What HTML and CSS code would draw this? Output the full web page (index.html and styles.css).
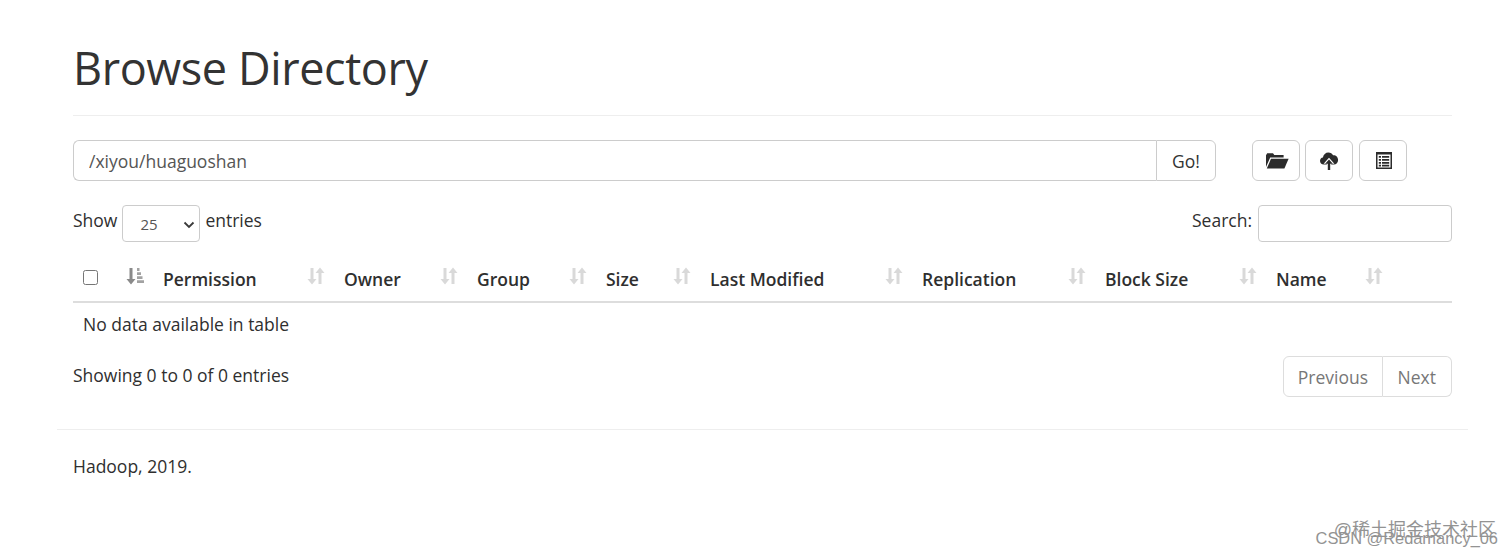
FILE: index.html
```html
<!DOCTYPE html>
<html lang="en">
<head>
    <meta charset="UTF-8">
    <title>Browsing HDFS</title>
    <link rel="stylesheet" href="styles.css">
</head>
<body>
    <div class="container">
        <div class="page-header">
            <h1>Browse Directory</h1>
        </div>

        <div class="toolbar">
            <div class="path-group">
                <input class="path-input" type="text" value="/xiyou/huaguoshan">
                <button class="go-btn">Go!</button>
            </div>
            <div class="icon-btns">
                <button class="icon-btn">
                    <svg class="icon-shift" width="24" height="17" viewBox="0 0 24 17"><path fill="#2b2b2b" d="M1 15V3.200L2.200 1.200H8L9.300 3H18.600V5.600H5.200L1 15Z"/><path fill="#2b2b2b" d="M6 6.800H23.600L19.400 16.400H1.800Z"/></svg>
                </button>
                <button class="icon-btn">
                    <svg width="20" height="20" viewBox="0 0 20 20"><path fill="#2b2b2b" d="M5 13.600C2.400 13.600 1 11.800 1 9.800 1 8 2.300 6.600 3.900 6.400 4.400 3.400 6.600 1.400 9.400 1.400c2.100 0 3.900 1.100 4.700 2.900 2.800-.2 5 1.900 5 4.800 0 2.400-1.800 4.500-4.100 4.500Z"/><path fill="#fff" d="M10 6.800 15.400 12.800H12.200V19.600H7.800V12.800H4.600Z"/><path fill="#2b2b2b" d="M10 8.400 13.800 12.800H11.200V19H8.800V12.800H6.200Z"/></svg>
                </button>
                <button class="icon-btn">
                    <svg class="icon-shift" width="16" height="17" viewBox="0 0 16 17"><path fill="#2b2b2b" fill-rule="evenodd" d="M0 0H16V17H0ZM1.500 2.500V15.500H14.500V2.500ZM2.800 4H5V5.800H2.800ZM6 4H13.200V5.800H6ZM2.800 7H5V8.800H2.800ZM6 7H13.200V8.800H6ZM2.800 10H5V11.800H2.800ZM6 10H13.200V11.800H6ZM2.800 12.800H5V14.400H2.800ZM6 12.800H13.200V14.400H6Z"/></svg>
                </button>
            </div>
        </div>

        <div class="table-top">
            <label class="length-label">Show
                <span class="select-wrap">
                    <select class="length-select"><option>25</option></select>
                    <svg class="select-arrow" width="12" height="8" viewBox="0 0 12 8"><path fill="none" stroke="#3a3a3a" stroke-width="1.800" d="M1.500 1.500 6 6 10.500 1.500"/></svg>
                </span>
                entries</label>
            <label class="search-label">Search:
                <input class="search-input" type="text"></label>
        </div>

        <table class="file-table">
            <thead>
                <tr>
                    <th class="col-check">
                        <div class="th-inner">
                            <input class="row-check" type="checkbox">
                            <svg class="sort-icon" width="18" height="18" viewBox="0 0 18 18"><path fill="#8a8a8a" d="M3.500 1H6.500V12H9.500L5 17.500.5 12H3.500Z"/><path fill="#a2a2a2" d="M11 1H13.500V4H11ZM11 5.200H15V8H11ZM11 9.200H16.500V12H11ZM11 13.200H18V16H11Z"/></svg>
                        </div>
                    </th>
                    <th class="col-perm"><div class="th-inner">Permission<svg class="sort-icon" width="18" height="18" viewBox="0 0 18 18"><path class="sort-down" d="M3.500 1H6.500V12H9.500L5 17.500.5 12H3.500Z"/><path class="sort-up" d="M11.500 17V6H8.500L13 .5 17.500 6H14.500V17Z"/></svg></div></th>
                    <th class="col-owner"><div class="th-inner">Owner<svg class="sort-icon" width="18" height="18" viewBox="0 0 18 18"><path class="sort-down" d="M3.500 1H6.500V12H9.500L5 17.500.5 12H3.500Z"/><path class="sort-up" d="M11.500 17V6H8.500L13 .5 17.500 6H14.500V17Z"/></svg></div></th>
                    <th class="col-group"><div class="th-inner">Group<svg class="sort-icon" width="18" height="18" viewBox="0 0 18 18"><path class="sort-down" d="M3.500 1H6.500V12H9.500L5 17.500.5 12H3.500Z"/><path class="sort-up" d="M11.500 17V6H8.500L13 .5 17.500 6H14.500V17Z"/></svg></div></th>
                    <th class="col-size"><div class="th-inner">Size<svg class="sort-icon" width="18" height="18" viewBox="0 0 18 18"><path class="sort-down" d="M3.500 1H6.500V12H9.500L5 17.500.5 12H3.500Z"/><path class="sort-up" d="M11.500 17V6H8.500L13 .5 17.500 6H14.500V17Z"/></svg></div></th>
                    <th class="col-modified"><div class="th-inner">Last Modified<svg class="sort-icon" width="18" height="18" viewBox="0 0 18 18"><path class="sort-down" d="M3.500 1H6.500V12H9.500L5 17.500.5 12H3.500Z"/><path class="sort-up" d="M11.500 17V6H8.500L13 .5 17.500 6H14.500V17Z"/></svg></div></th>
                    <th class="col-repl"><div class="th-inner">Replication<svg class="sort-icon" width="18" height="18" viewBox="0 0 18 18"><path class="sort-down" d="M3.500 1H6.500V12H9.500L5 17.500.5 12H3.500Z"/><path class="sort-up" d="M11.500 17V6H8.500L13 .5 17.500 6H14.500V17Z"/></svg></div></th>
                    <th class="col-block"><div class="th-inner">Block Size<svg class="sort-icon" width="18" height="18" viewBox="0 0 18 18"><path class="sort-down" d="M3.500 1H6.500V12H9.500L5 17.500.5 12H3.500Z"/><path class="sort-up" d="M11.500 17V6H8.500L13 .5 17.500 6H14.500V17Z"/></svg></div></th>
                    <th class="col-name"><div class="th-inner">Name<svg class="sort-icon" width="18" height="18" viewBox="0 0 18 18"><path class="sort-down" d="M3.500 1H6.500V12H9.500L5 17.500.5 12H3.500Z"/><path class="sort-up" d="M11.500 17V6H8.500L13 .5 17.500 6H14.500V17Z"/></svg></div></th>
                    <th class="col-rest"></th>
                </tr>
            </thead>
            <tbody>
                <tr><td colspan="10">No data available in table</td></tr>
            </tbody>
        </table>

        <div class="table-bottom">
            <div class="info">Showing 0 to 0 of 0 entries</div>
            <div class="pager">
                <a class="page-link">Previous</a>
                <a class="page-link">Next</a>
            </div>
        </div>

        <hr class="footer-line">
        <div class="footer">Hadoop, 2019.</div>
    </div>
    <div class="watermark watermark-top">@稀土掘金技术社区</div>
    <div class="watermark watermark-bottom">CSDN @Redamancy_06</div>
</body>
</html>
```

FILE: styles.css
```css
body {
    margin: 0;
    font-family: "Open Sans", "Noto Sans", sans-serif;
    font-size: 17.5px;
    color: #2f2f2f;
    background: #fff;
    height: 557px;
    overflow: hidden;
}
.container {
    width: 1411px;
    margin-left: 57px;
    padding: 0 16px;
    box-sizing: border-box;
}
.page-header {
    height: 115px;
    border-bottom: 1px solid #eee;
}
h1 {
    margin: 0;
    padding-top: 36px;
    font-size: 45px;
    letter-spacing: -0.4px;
    line-height: 64px;
    font-weight: 400;
    color: #333;
}
.toolbar {
    display: flex;
    margin-top: 24px;
}
.path-group {
    display: flex;
    width: 1143px;
    height: 41px;
}
.path-input {
    flex: 1;
    min-width: 0;
    padding: 0 15px;
    border: 1px solid #ccc;
    border-right: none;
    border-radius: 6px 0 0 6px;
    font: inherit;
    color: #555;
    outline: none;
}
.go-btn {
    width: 60px;
    border: 1px solid #ccc;
    border-radius: 0 6px 6px 0;
    background: #fff;
    font: inherit;
    color: #333;
}
.icon-btns {
    display: flex;
    gap: 5.3px;
    margin-left: 36px;
}
.icon-btn {
    display: flex;
    align-items: center;
    justify-content: center;
    width: 48px;
    height: 41px;
    padding: 0;
    border: 1px solid #ccc;
    border-radius: 6px;
    background: #fff;
}
.icon-shift {
    margin-left: 2px;
}
.table-top {
    display: flex;
    justify-content: space-between;
    margin-top: 24px;
    height: 37px;
}
.length-label,
.search-label {
    display: flex;
    align-items: flex-start;
    gap: 6px;
    line-height: 31px;
}
.length-label {
    gap: 5px;
}
.select-wrap {
    display: block;
    position: relative;
    height: 37px;
}
.length-select {
    appearance: none;
    display: block;
    width: 78px;
    height: 37px;
    padding-left: 17px;
    border: 1px solid #ccc;
    border-radius: 4px;
    background: #fff;
    font-family: inherit;
    font-size: 15px;
    color: #555;
}
.select-arrow {
    position: absolute;
    top: 16px;
    right: 5px;
}
.search-input {
    width: 194px;
    height: 37px;
    box-sizing: border-box;
    border: 1px solid #ccc;
    border-radius: 4px;
}
.file-table {
    width: 1379px;
    margin-top: 14px;
    border-collapse: collapse;
    table-layout: fixed;
}
.file-table th {
    height: 46px;
    padding: 0 10px;
    box-sizing: border-box;
    border-bottom: 2px solid #ddd;
    text-align: left;
    font-size: 17.5px;
    font-weight: 600;
}
.th-inner {
    display: flex;
    justify-content: space-between;
    align-items: center;
}
.sort-icon {
    flex: none;
    margin-top: -5px;
    margin-right: -1px;
}
.sort-down,
.sort-up {
    fill: #d9d9d9;
}
.row-check {
    width: 15px;
    height: 15px;
    margin: -3px 0 0 0;
}
.col-check { width: 80px; }
.col-perm { width: 181px; }
.col-owner { width: 133px; }
.col-group { width: 129px; }
.col-size { width: 104px; }
.col-modified { width: 212px; }
.col-repl { width: 183px; }
.col-block { width: 171px; }
.col-name { width: 126px; }
.file-table td {
    height: 42px;
    padding: 0 10px 4px;
}
.table-bottom {
    display: flex;
    justify-content: space-between;
    margin-top: 7px;
}
.info {
    padding-top: 7px;
}
.pager {
    display: flex;
    height: 41px;
}
.page-link {
    display: flex;
    align-items: center;
    padding: 0 15px;
    border: 1px solid #ddd;
    color: #777;
}
.page-link:first-child {
    padding: 0 13.5px;
    border-radius: 6px 0 0 6px;
}
.page-link:last-child {
    border-left: none;
    border-radius: 0 6px 6px 0;
}
.footer-line {
    margin: 32px -16px 0;
    border: none;
    border-top: 1px solid #eee;
}
.footer {
    margin-top: 24px;
}
.watermark {
    position: absolute;
    color: #939393;
    white-space: nowrap;
    font-family: "Liberation Sans", "Noto Sans CJK SC", sans-serif;
}
.watermark-top {
    right: 16px;
    top: 515px;
    font-size: 18px;
}
.watermark-bottom {
    right: 14px;
    top: 529px;
    font-size: 16.4px;
}
```
